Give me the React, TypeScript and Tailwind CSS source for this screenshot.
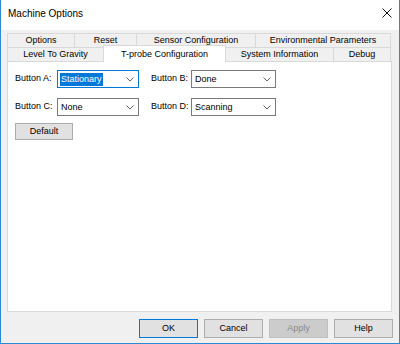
import React from "react";

function Chevron() {
  return (
    <svg width="8" height="5" viewBox="0 0 8 5" className="shrink-0">
      <polyline points="0.5,0.5 4,4 7.5,0.5" fill="none" stroke="#606060" strokeWidth="1" />
    </svg>
  );
}

function Combo({ value, width, focused }: { value: string; width: string; focused?: boolean }) {
  return (
    <div
      className={`flex items-center h-[18px] bg-white border pl-[2px] pr-[4px] ${width} ${
        focused ? "border-[#0078d7]" : "border-[#7a7a7a]"
      }`}
    >
      <div className="flex-1 flex items-center">
        <span
          className={`leading-[13px] px-[1px] ${focused ? "bg-[#0078d7] text-white" : "text-black"}`}
        >
          {value}
        </span>
      </div>
      <Chevron />
    </div>
  );
}

function Tab({ label, width, last }: { label: string; width: string; last?: boolean }) {
  return (
    <div
      className={`flex items-center justify-center h-[14px] border-t border-l border-[#d9d9d9] bg-[#f0f0f0] ${width} ${
        last ? "border-r" : ""
      }`}
    >
      {label}
    </div>
  );
}

function Btn({ label, variant }: { label: string; variant?: "default" | "disabled" }) {
  const cls =
    variant === "default"
      ? "border-[#0078d7] bg-[#e1e1e1] text-black"
      : variant === "disabled"
      ? "border-[#bfbfbf] bg-[#cccccc] text-[#8a8a8a]"
      : "border-[#adadad] bg-[#e1e1e1] text-black";
  return (
    <div className={`flex items-center justify-center w-[59px] h-[19px] border ${cls}`}>{label}</div>
  );
}

export default function App() {
  return (
    <div className="w-[400px] h-[344px] flex flex-col border-l border-r border-b border-[#2b8ad6] font-['Liberation_Sans',Arial,sans-serif] text-[9px] text-black bg-[#f0f0f0] overflow-hidden">
      {/* Title bar */}
      <div className="h-[30px] bg-white flex items-center pl-[7px] pr-[6px]">
        <span className="text-[10px] flex-1 pb-[4px]">Machine Options</span>
        <svg width="10" height="10" viewBox="0 0 10 10" className="mb-[4px] mr-[1px]">
          <line x1="0.5" y1="0.5" x2="9.5" y2="9.5" stroke="#111" strokeWidth="1" />
          <line x1="9.5" y1="0.5" x2="0.5" y2="9.5" stroke="#111" strokeWidth="1" />
        </svg>
      </div>

      {/* Body */}
      <div className="flex-1 flex flex-col pl-[6px] pr-[7px] pt-[3px]">
        {/* Tab rows */}
        <div className="flex">
          <Tab label="Options" width="w-[67px]" />
          <Tab label="Reset" width="w-[62px]" />
          <Tab label="Sensor Configuration" width="w-[119px]" />
          <Tab label="Environmental Parameters" width="w-[136px]" last />
        </div>
        <div className="flex items-end h-[14px]">
          <Tab label="Level To Gravity" width="w-[96px]" />
          <div className="relative z-10 flex items-start justify-center pt-[2px] w-[123px] h-[17px] -mb-[1px] bg-white border-t border-l border-r border-[#d9d9d9]">
            T-probe Configuration
          </div>
          <div className="flex items-center justify-center h-[14px] w-[107px] border-t border-[#d9d9d9] bg-[#f0f0f0]">
            System Information
          </div>
          <Tab label="Debug" width="w-[58px]" last />
        </div>

        {/* Panel */}
        <div className="flex-1 bg-white border border-[#d9d9d9] pl-[7px] pt-[8px] flex flex-col">
          <div className="flex items-start">
            <div className="w-[42px] pt-[3px] leading-[11px]">Button A:</div>
            <Combo value="Stationary" width="w-[82px]" focused />
            <div className="w-[40px] ml-[12px] pt-[3px] leading-[11px]">Button B:</div>
            <Combo value="Done" width="w-[85px]" />
          </div>
          <div className="flex items-start mt-[10px]">
            <div className="w-[42px] pt-[3px] leading-[11px]">Button C:</div>
            <Combo value="None" width="w-[82px]" />
            <div className="w-[40px] ml-[12px] pt-[3px] leading-[11px]">Button D:</div>
            <Combo value="Scanning" width="w-[85px]" />
          </div>
          <div className="mt-[7px] flex">
            <div className="flex items-center justify-center w-[58px] h-[17px] border border-[#adadad] bg-[#e1e1e1]">
              Default
            </div>
          </div>
        </div>

        {/* Dialog buttons */}
        <div className="flex justify-end gap-[6px] pt-[7px] pb-[5px] -mr-[1px]">
          <Btn label="OK" variant="default" />
          <Btn label="Cancel" />
          <Btn label="Apply" variant="disabled" />
          <Btn label="Help" />
        </div>
      </div>
    </div>
  );
}
